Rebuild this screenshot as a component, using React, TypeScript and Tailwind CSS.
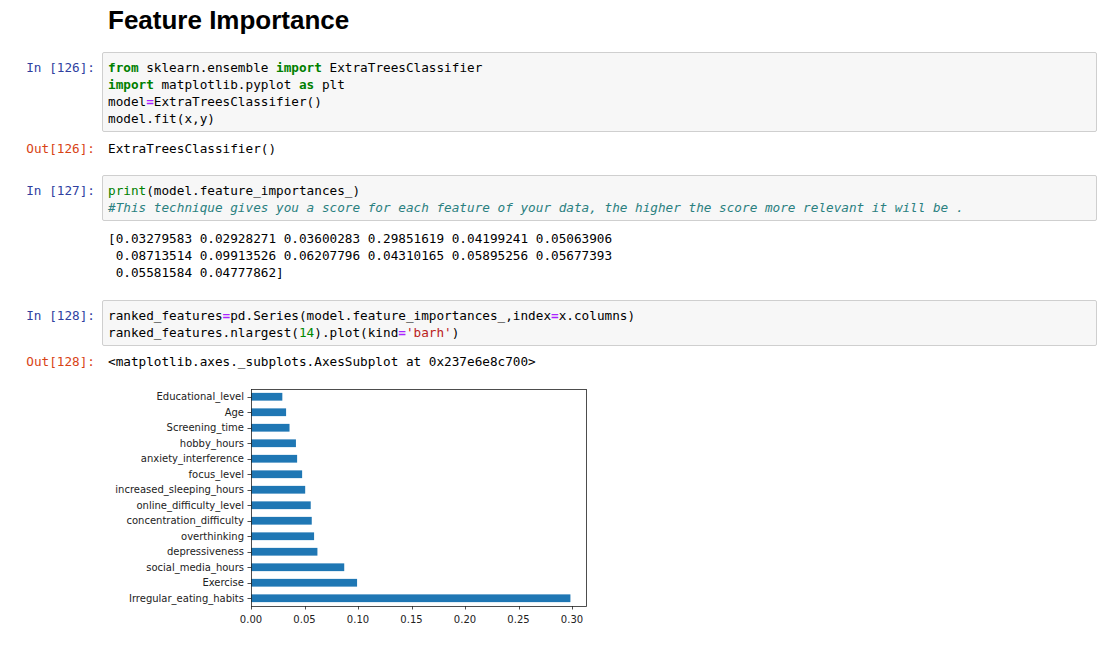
import React from 'react';

const mono = "font-['DejaVu_Sans_Mono','Liberation_Mono',monospace] text-[12.7px] leading-[17px]";

const Kw = ({ children }: { children: React.ReactNode }) => <span className="text-[#008000] font-bold">{children}</span>;
const Op = ({ children }: { children: React.ReactNode }) => <span className="text-[#AA22FF] font-bold">{children}</span>;
const Bi = ({ children }: { children: React.ReactNode }) => <span className="text-[#008000]">{children}</span>;
const Num = ({ children }: { children: React.ReactNode }) => <span className="text-[#008800]">{children}</span>;
const Str = ({ children }: { children: React.ReactNode }) => <span className="text-[#BA2121]">{children}</span>;
const Cm = ({ children }: { children: React.ReactNode }) => <span className="text-[#2a8080] italic">{children}</span>;

const InputCell = ({ n, children, className = '' }: { n: number; children: React.ReactNode; className?: string }) => (
  <div className={`flex ${className}`}>
    <div className={`w-[102px] shrink-0 text-right pr-[7px] pt-[7px] text-[#303F9F] ${mono}`}>In [{n}]:</div>
    <div className={`flex-1 mr-[8px] border border-[#cfcfcf] rounded-[2px] bg-[#f7f7f7] pl-[5px] pt-[6px] pb-[4px] text-black whitespace-pre ${mono}`}>
      {children}
    </div>
  </div>
);

const OutputRow = ({ n, children, className = '' }: { n?: number; children: React.ReactNode; className?: string }) => (
  <div className={`flex ${className}`}>
    <div className={`w-[102px] shrink-0 text-right pr-[7px] text-[#D84315] ${mono}`}>{n !== undefined ? `Out[${n}]:` : ''}</div>
    <div className={`flex-1 pl-[6px] text-black whitespace-pre ${mono}`}>{children}</div>
  </div>
);

const features: [string, number][] = [
  ['Educational_level', 0.02928271],
  ['Age', 0.03279583],
  ['Screening_time', 0.03600283],
  ['hobby_hours', 0.04199241],
  ['anxiety_interference', 0.04310165],
  ['focus_level', 0.04777862],
  ['increased_sleeping_hours', 0.05063906],
  ['online_difficulty_level', 0.05581584],
  ['concentration_difficulty', 0.05677393],
  ['overthinking', 0.05895256],
  ['depressiveness', 0.06207796],
  ['social_media_hours', 0.08713514],
  ['Exercise', 0.09913526],
  ['Irregular_eating_habits', 0.29851619],
];

const BarChart = () => {
  const x0 = 143, y0 = 17, x1 = 478, y1 = 234;
  const row = (y1 - y0) / features.length;
  const sx = (v: number) => x0 + v * 1070;
  const ticks = [0, 0.05, 0.1, 0.15, 0.2, 0.25, 0.3];
  return (
    <svg width={490} height={262} className="block" fontFamily="'DejaVu Sans', sans-serif" fontSize={10}>
      {features.map(([name, v], i) => {
        const cy = y0 + (i + 0.5) * row;
        return (
          <g key={name}>
            <rect x={x0} y={cy - row / 4} width={sx(v) - x0} height={row / 2} fill="#1f77b4" />
            <line x1={x0 - 3.5} x2={x0} y1={Math.round(cy) + 0.5} y2={Math.round(cy) + 0.5} stroke="#222" strokeWidth={0.8} />
            <text x={x0 - 7} y={cy + 3.6} textAnchor="end" fill="#222">{name}</text>
          </g>
        );
      })}
      {ticks.map((t) => {
        const x = Math.round(sx(t)) + 0.5;
        return (
          <g key={t}>
            <line x1={x} x2={x} y1={y1} y2={y1 + 3.5} stroke="#222" strokeWidth={0.8} />
            <text x={sx(t)} y={y1 + 16.5} textAnchor="middle" fill="#222">{t.toFixed(2)}</text>
          </g>
        );
      })}
      <rect x={x0 + 0.5} y={y0 + 0.5} width={x1 - x0} height={y1 - y0} fill="none" stroke="#222" strokeWidth={0.8} />
    </svg>
  );
};

const App = () => {
  return (
    <div className="min-h-screen w-[1105px] bg-white">
      <div className="pt-[5px] pl-[108px]">
        <h2 className="font-['Liberation_Sans',Arial,sans-serif] font-bold text-[26px] leading-[30px] text-black">Feature Importance</h2>
      </div>

      <InputCell n={126} className="mt-[17px]">
        <div><Kw>from</Kw> sklearn.ensemble <Kw>import</Kw> ExtraTreesClassifier</div>
        <div><Kw>import</Kw> matplotlib.pyplot <Kw>as</Kw> plt</div>
        <div>model<Op>=</Op>ExtraTreesClassifier()</div>
        <div>model.fit(x,y)</div>
      </InputCell>
      <OutputRow n={126} className="mt-[8px]">ExtraTreesClassifier()</OutputRow>

      <InputCell n={127} className="mt-[18px]">
        <div><Bi>print</Bi>(model.feature_importances_)</div>
        <div><Cm>#This technique gives you a score for each feature of your data, the higher the score more relevant it will be .</Cm></div>
      </InputCell>
      <OutputRow className="mt-[9px]">
        <div>[0.03279583 0.02928271 0.03600283 0.29851619 0.04199241 0.05063906</div>
        <div> 0.08713514 0.09913526 0.06207796 0.04310165 0.05895256 0.05677393</div>
        <div> 0.05581584 0.04777862]</div>
      </OutputRow>

      <InputCell n={128} className="mt-[19px]">
        <div>ranked_features<Op>=</Op>pd.Series(model.feature_importances_,index<Op>=</Op>x.columns)</div>
        <div>ranked_features.nlargest(<Num>14</Num>).plot(kind<Op>=</Op><Str>'barh'</Str>)</div>
      </InputCell>
      <OutputRow n={128} className="mt-[7px]">&lt;matplotlib.axes._subplots.AxesSubplot at 0x237e6e8c700&gt;</OutputRow>

      <div className="flex mt-[2px]">
        <div className="w-[108px] shrink-0" />
        <BarChart />
      </div>
    </div>
  );
};

export default App;
